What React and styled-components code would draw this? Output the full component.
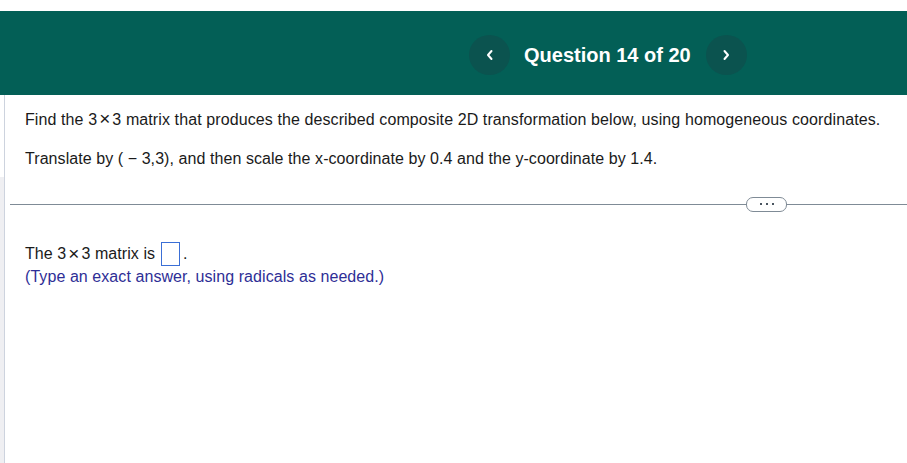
import React from "react";
import styled, { createGlobalStyle } from "styled-components";

const Global = createGlobalStyle`
  html, body { margin: 0; padding: 0; background: #ffffff; }
  body { font-family: Arial, "Liberation Sans", sans-serif; }
  #root { height: 463px; }
`;

const Page = styled.div`
  height: 463px;
  display: flex;
  flex-direction: column;
  padding-top: 11px;
  box-sizing: border-box;
  overflow: hidden;
`;

const Header = styled.header`
  height: 84px;
  background: #035f56;
  display: flex;
  align-items: center;
  justify-content: flex-start;
  padding: 4px 0 0 469px;
  box-sizing: border-box;
  flex-shrink: 0;
`;

const NavButton = styled.button`
  width: 41px;
  height: 40px;
  border-radius: 50%;
  border: none;
  background: #0b534f;
  color: #ffffff;
  display: flex;
  align-items: center;
  justify-content: center;
  padding: 0;
  cursor: pointer;
`;

const Title = styled.h1`
  margin: 0 15px 0 14px;
  font-family: Arial, "Liberation Sans", sans-serif;
  font-weight: 700;
  font-size: 20px;
  color: #ffffff;
  white-space: nowrap;
`;

const Body = styled.div`
  flex: 1;
  display: flex;
`;

const Rail = styled.div`
  width: 4px;
  border-right: 1px solid #cdd3de;
  display: flex;
  flex-direction: column;
  flex-shrink: 0;
`;

const RailTop = styled.div`
  height: 82px;
  background: #ffffff;
`;

const RailRest = styled.div`
  flex: 1;
  background: #efeff2;
`;

const Main = styled.main`
  flex: 1;
  display: flex;
  flex-direction: column;
  padding-top: 15px;
`;

const Para = styled.p`
  margin: ${(p) => p.$top || 0}px 0 ${(p) => p.$gap || 0}px 20px;
  font-family: Arial, "Liberation Sans", sans-serif;
  font-size: 16px;
  line-height: 20px;
  letter-spacing: ${(p) => p.$ls || 0.07}px;
  color: ${(p) => p.$color || "#1a1a1a"};
  white-space: nowrap;
`;

const Times = styled.span`
  font-size: 19px;
  line-height: 16px;
  margin: 0 2px;
`;

const DividerRow = styled.div`
  margin: 27px 0 0 5px;
  height: 16px;
  display: flex;
  align-items: center;
`;

const Line = styled.div`
  height: 1px;
  background: #7f8b96;
  flex: ${(p) => (p.$grow ? 1 : "none")};
  width: ${(p) => (p.$w ? `${p.$w}px` : "auto")};
`;

const Pill = styled.button`
  width: 41px;
  height: 15px;
  border: 1px solid #7f8b96;
  border-radius: 7px;
  background: #ffffff;
  display: flex;
  align-items: center;
  justify-content: center;
  gap: 4px;
  padding: 0;
  box-sizing: border-box;
`;

const Dot = styled.span`
  width: 2px;
  height: 2px;
  background: #4a5560;
`;

const AnswerLine = styled.div`
  margin: 30px 0 0 20px;
  display: flex;
  align-items: center;
  font-family: Arial, "Liberation Sans", sans-serif;
  font-size: 16px;
  letter-spacing: 0.07px;
  color: #1a1a1a;
  height: 24px;
  white-space: pre;
`;

const AnswerBox = styled.span`
  display: inline-block;
  width: 17px;
  height: 22px;
  border: 1px solid #3b6fd6;
  margin: 0 3px 0 6px;
`;

const Chevron = ({ dir }) => (
  <svg width="10" height="12" viewBox="0 0 10 12">
    <path
      d={dir === "left" ? "M6.5 2 L3 6 L6.5 10" : "M3.5 2 L7 6 L3.5 10"}
      fill="none"
      stroke="#ffffff"
      strokeWidth="2"
      strokeLinecap="round"
      strokeLinejoin="round"
    />
  </svg>
);

export default function App() {
  return (
    <>
      <Global />
      <Page>
        <Header>
          <NavButton aria-label="Previous question">
            <Chevron dir="left" />
          </NavButton>
          <Title>Question 14 of 20</Title>
          <NavButton aria-label="Next question">
            <Chevron dir="right" />
          </NavButton>
        </Header>
        <Body>
          <Rail>
            <RailTop />
            <RailRest />
          </Rail>
          <Main>
            <Para $gap={19} $ls={0.1}>
              Find the 3<Times>×</Times>3 matrix that produces the described composite 2D transformation below, using homogeneous coordinates.
            </Para>
            <Para>
              Translate by ( − 3,3), and then scale the x-coordinate by 0.4 and the y-coordinate by 1.4.
            </Para>
            <DividerRow>
              <Line $w={736} />
              <Pill aria-label="More">
                <Dot />
                <Dot />
                <Dot />
              </Pill>
              <Line $grow />
            </DividerRow>
            <AnswerLine>
              The 3<Times>×</Times>3 matrix is
              <AnswerBox />.
            </AnswerLine>
            <Para $top={1} $color="#2e2e96">(Type an exact answer, using radicals as needed.)</Para>
          </Main>
        </Body>
      </Page>
    </>
  );
}
